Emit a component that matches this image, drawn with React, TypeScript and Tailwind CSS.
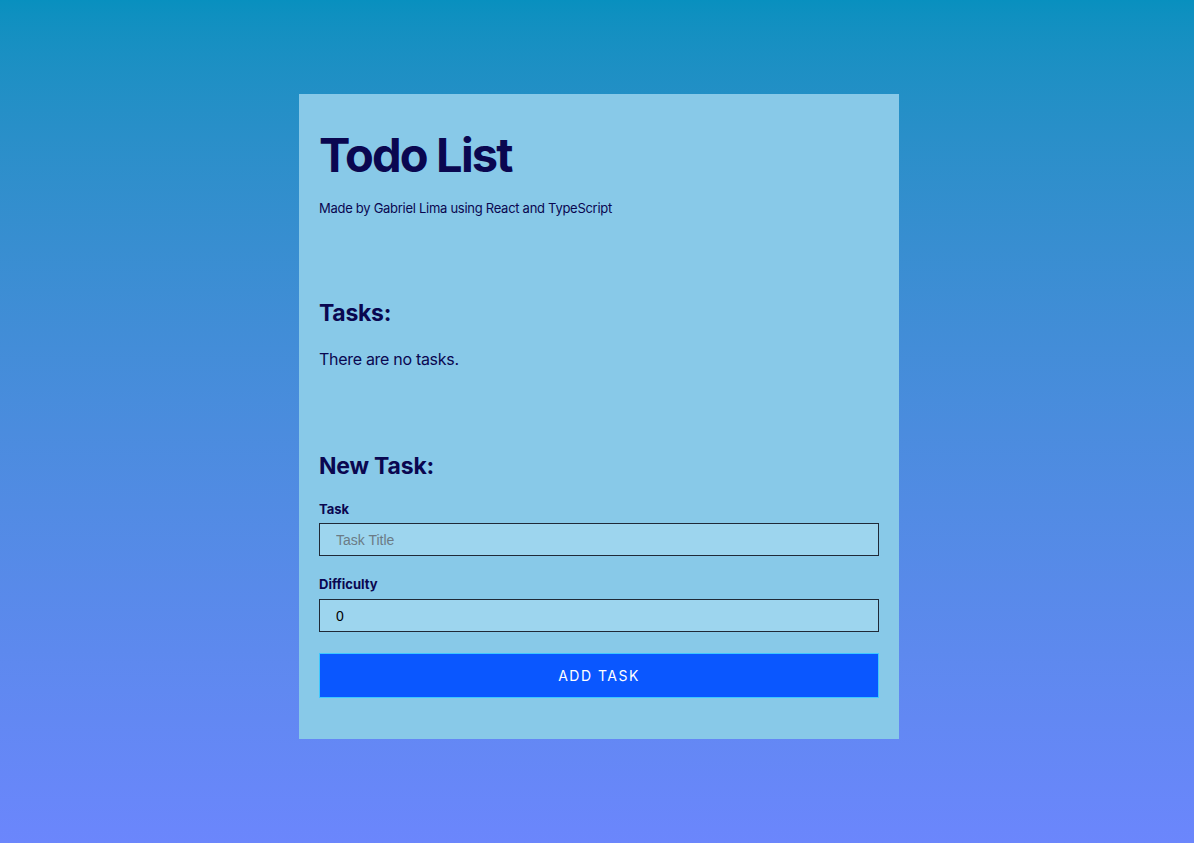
import { useState } from 'react';

// Todo List - single card page
export default function App() {
  const [title, setTitle] = useState('');
  const [difficulty, setDifficulty] = useState('0');

  return (
    <div className="min-h-[843px] w-full bg-gradient-to-b from-[#0890bf] to-[#6b86fc] pt-[94px] font-['Inter','Noto_Sans',sans-serif] text-[#0a0750]">
      <div className="flex justify-center">
        <div className="ml-[4px] flex h-[645px] w-[600px] flex-col bg-[#88c9e8] px-5 pt-8">
          {/* header */}
          <h1 className="text-[47px] font-bold leading-[58px] tracking-[-1.8px]">Todo List</h1>
          <p className="mt-[14px] text-[13px] leading-[20px] tracking-[-0.28px]">
            Made by Gabriel Lima using React and TypeScript
          </p>

          {/* tasks */}
          <h2 className="mt-[79px] text-[23px] font-bold leading-[32px] tracking-[-0.3px]">Tasks:</h2>
          <p className="mt-[18px] text-[16px] leading-[24px] tracking-[-0.3px]">There are no tasks.</p>

          {/* form */}
          <h2 className="mt-[79px] text-[23px] font-bold leading-[32px] tracking-[-0.2px]">New Task:</h2>
          <label className="mt-[17px] block text-[13px] font-bold leading-[20px]">Task</label>
          <input
            value={title}
            onChange={(e) => setTitle(e.target.value)}
            placeholder="Task Title"
            className="mt-[4px] h-[33px] w-full border border-[#1f2937] bg-[#9dd5ee] px-4 font-['Liberation_Sans',Arial,sans-serif] text-[14px] text-black outline-none placeholder:text-[#6b7b85]"
          />
          <label className="mt-[18px] block text-[13px] font-bold leading-[20px]">Difficulty</label>
          <input
            value={difficulty}
            onChange={(e) => setDifficulty(e.target.value)}
            className="mt-[5px] h-[33px] w-full border border-[#1f2937] bg-[#9dd5ee] px-4 font-['Liberation_Sans',Arial,sans-serif] text-[14px] text-black outline-none"
          />
          <button className="mt-[21px] h-[45px] w-full border border-[#3fc8ff] bg-[#0a57ff] text-[14px] uppercase tracking-[1.5px] text-white">
            Add Task
          </button>
        </div>
      </div>
    </div>
  );
}
